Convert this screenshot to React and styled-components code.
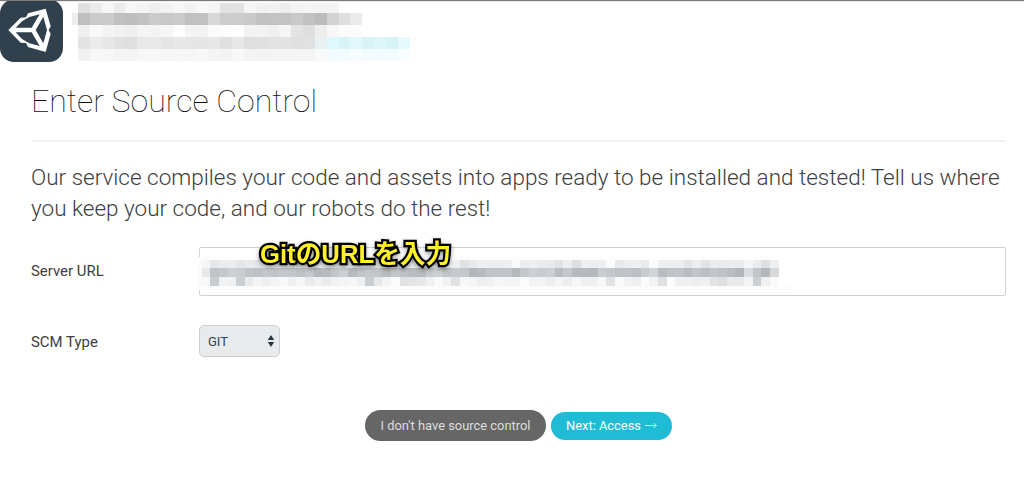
import React from 'react';
import styled, { createGlobalStyle } from 'styled-components';

const GlobalStyle = createGlobalStyle`
  * {
    box-sizing: border-box;
  }
  body {
    margin: 0;
    background: #fff;
    font-family: Roboto, 'Noto Sans CJK JP', sans-serif;
    color: #404040;
  }
`;

const Page = styled.div`
  height: 490px;
  border-top: 1px solid #7c7a7a;
  box-shadow: inset 0 1px #ececec;
  overflow: hidden;
`;

const Header = styled.header`
  display: flex;
  height: 62px;
`;

const Logo = styled.svg`
  display: block;
  width: 63px;
  height: 62px;
  margin-right: 9px;
`;

const Mosaic = styled.div`
  padding-top: ${({ $top }) => $top}px;
`;

const MosaicRow = styled.div`
  display: flex;
  height: ${({ $height }) => $height}px;
`;

const Cell = styled.span`
  flex: none;
  width: ${({ $width }) => $width}px;
  background: ${({ $color }) => $color};
`;

const Content = styled.main`
  padding: 0 18px 0 31px;
`;

const Title = styled.h1`
  height: 79px;
  margin: 0;
  padding-top: 17px;
  border-bottom: 2px solid #f2f2f2;
  font-size: 32.1px;
  font-weight: 100;
  line-height: 42px;
  color: #111;
`;

const Lead = styled.p`
  margin: 20px 0 23px;
  font-size: 22.5px;
  font-weight: 300;
  line-height: 31px;
  white-space: nowrap;
`;

const Field = styled.div`
  display: flex;
  align-items: center;
  height: ${({ $height }) => $height}px;
  margin-bottom: 29px;
`;

const Label = styled.label`
  width: 168px;
  padding-bottom: ${({ $bottom }) => $bottom || 0}px;
  padding-top: ${({ $top }) => $top || 0}px;
  font-size: 14.95px;
`;

const UrlBox = styled.div`
  position: relative;
  flex: 1;
  height: 49px;
  border: 1px solid #d2d2d2;
  border-radius: 2px;
`;

const UrlMosaic = styled(Mosaic)`
  margin-left: -1px;
`;

const Note = styled.span`
  position: absolute;
  top: -10px;
  left: 60px;
  color: #fff02a;
  font-family: 'Liberation Sans', 'Noto Sans CJK JP', sans-serif;
  font-size: 25.7px;
  font-weight: 700;
  line-height: 32px;
  white-space: nowrap;
  -webkit-text-stroke: 4.5px #000;
  paint-order: stroke fill;
  filter: drop-shadow(0 2px 2px rgba(0, 0, 0, 0.4));
`;

const Select = styled.div`
  display: flex;
  align-items: center;
  justify-content: space-between;
  width: 81px;
  height: 32px;
  padding: 0 4px 0 8px;
  border: 1px solid #ced0d1;
  border-radius: 5px;
  background: #e8eaeb;
  color: #35434d;
  font-size: 13px;
`;

const Actions = styled.div`
  display: flex;
  align-items: center;
  justify-content: center;
  gap: 5px;
  margin-top: 53px;
`;

const Button = styled.button`
  display: flex;
  align-items: center;
  justify-content: center;
  gap: 4px;
  height: ${({ $primary }) => ($primary ? 28 : 31)}px;
  width: ${({ $primary }) => ($primary ? 121 : 181)}px;
  padding: 0;
  border: 0;
  border-radius: 16px;
  background: ${({ $primary }) => ($primary ? '#20bbd4' : '#666')};
  color: ${({ $primary }) => ($primary ? '#fff' : '#ddd')};
  font: 12.9px Roboto, sans-serif;
  white-space: nowrap;
`;

// one grey level (or a full colour) per censored block
const titleRows = [
  { height: 10, shades: 'e0 eb f6 eb f6 f4 ef f2 f6 f2 f8 f5 e2 e2 f5 f0 f2 ed f4 f5 f4 f4' },
  { height: 12, shades: 'bf cb cb c0 be c3 cb c8 cb c1 c1 d8 cd cc ca c2 c3 c3 ca c2 bb d2 df ea' },
  { height: 12, shades: 'f0 f9 f4 f1 ef f5 f3 f6 fe f4 f3 fb fd fe f3 f3 f0 f5 e4 de ee f7 fc fc' },
  {
    height: 12,
    shades:
      'e3 eb e7 e1 df e8 e9 e4 e8 e6 e6 e7 e0 e7 df e0 e3 e2 e0 e1 e6f3f2 dff9fe d8f4f8 e2f8fb d7f3f8 def6f9 d8f3f8 e6f9fc',
  },
  {
    height: 12,
    shades:
      'f1 f8 f7 f4 f4 f7 f8 f6 f7 f6 f8 f4 f3 f8 f4 f3 f4 f5 f4 f5 f9fbfa f2fcfe f2fcfe f7fdff f2fcfe f4fcff f2fbfe f8fdff',
  },
];

const urlRows = [
  'f6 e8 ec ee e6 eb e6 ee ea ee ec e8 ec f0 ee e8 ea ee ec e8 ee f0 ec ea ee f0 ec ee f8 f0 e2 ea f0 ee ee f0 fa ed f0 ec ea e3 ee df f0 ee ee fc e9 ee f0 ea fb ee ee ee e4 ee e4 ed ea ec ec f6 ec e0 ee',
  'e8 c4 c8 d0 cd c5 c2 c8 c3 c9 c7 c1 c9 b9 bb c7 d1 bb c5 c9 c6 bc c8 c4 bc bc cc d0 c5 ca c8 b8 bb c4 c4 c4 b9 c8 d0 cc d0 bd c9 bb bb b9 cd c9 c3 c5 c0 cb d5 bd c3 c5 bd c6 c0 c6 c3 bd b6 dc c6 b8 d9',
  'f8 cd f2 f0 cf ea f4 ef f4 f8 f0 f6 ea f2 eb f2 f4 f6 f0 ce e8 f4 fc e2 e4 e8 f0 fa f2 e2 f8 f4 ee f0 f6 f4 f4 fc f2 f4 ee f4 ee f6 f0 f0 f8 e3 fa f2 ee fc f2 e0 fb f0 f0 ee f0 e3 df e9 ea f3 cf f0 fa',
];

const heights = [8, 9, 9];

const toColor = (shade) => (shade.length === 2 ? `#${shade}${shade}${shade}` : `#${shade}`);

const toCoolColor = (shade) => {
  const level = parseInt(shade, 16);
  const tint = Math.min(3, Math.round((255 - level) / 16));
  return `rgb(${level - tint}, ${level}, ${level + tint})`;
};

const Unity = () => {
  return (
    <Logo viewBox="0 3 189 186">
      <rect y="-2" width="189" height="188" rx="42" fill="#30404c" />
      <path
        fill="#fff"
        fillRule="evenodd"
        d="M25 90L62 53L78 52L84 40L137 26L152 79L146 90L152 101L137 156L84 141L78 129L62 128Z
          M47 83H95L119 43L88 51L66 64Z
          M47 97H95L119 138L88 130L66 117Z
          M107 90L130 130L141 90L130 50Z"
      />
    </Logo>
  );
};

const App = () => {
  return (
    <>
      <GlobalStyle />
      <Page>
        <Header>
          <Unity />
          <Mosaic $top={2}>
            {titleRows.map((row, i) => (
              <MosaicRow key={i} $height={row.height}>
                <Cell $width={6} $color={i === 1 ? '#eee' : '#fff'} />
                {row.shades.split(' ').map((shade, j) => (
                  <Cell key={j} $width={11.85} $color={toColor(shade)} />
                ))}
              </MosaicRow>
            ))}
          </Mosaic>
        </Header>
        <Content>
          <Title>Enter Source Control</Title>
          <Lead>
            Our service compiles your code and assets into apps ready to be installed and tested! Tell us where
            <br />
            you keep your code, and our robots do the rest!
          </Lead>
          <Field $height={49}>
            <Label $bottom={2}>Server URL</Label>
            <UrlBox>
              <UrlMosaic $top={9}>
                <MosaicRow $height={3}>
                  <Cell $width={589} $color="#fdfdfd" />
                </MosaicRow>
                {urlRows.map((row, i) => (
                  <MosaicRow key={i} $height={heights[i]}>
                    <Cell $width={2.7} $color="#fafafa" />
                    {row.split(' ').map((shade, j) => (
                      <Cell key={j} $width={8.615} $color={toCoolColor(shade)} />
                    ))}
                  </MosaicRow>
                ))}
                <MosaicRow $height={4}>
                  <Cell $width={594} $color="#fcfcfc" />
                </MosaicRow>
              </UrlMosaic>
              <Note>GitのURLを入力</Note>
            </UrlBox>
          </Field>
          <Field $height={32}>
            <Label $top={2}>SCM Type</Label>
            <Select>
              GIT
              <svg width="8" height="12" viewBox="0 0 8 12" fill="#263640">
                <path d="M4 0l3.2 5H.8zM4 12L.8 7h6.4z" />
              </svg>
            </Select>
          </Field>
          <Actions>
            <Button>I don't have source control</Button>
            <Button $primary>
              Next: Access
              <svg width="12" height="7" viewBox="0 0 12 7" fill="none" stroke="#fff" strokeWidth="0.8">
                <path d="M0 3.5h11.3M8.8 1l2.5 2.5L8.8 6" />
              </svg>
            </Button>
          </Actions>
        </Content>
      </Page>
    </>
  );
};

export default App;
